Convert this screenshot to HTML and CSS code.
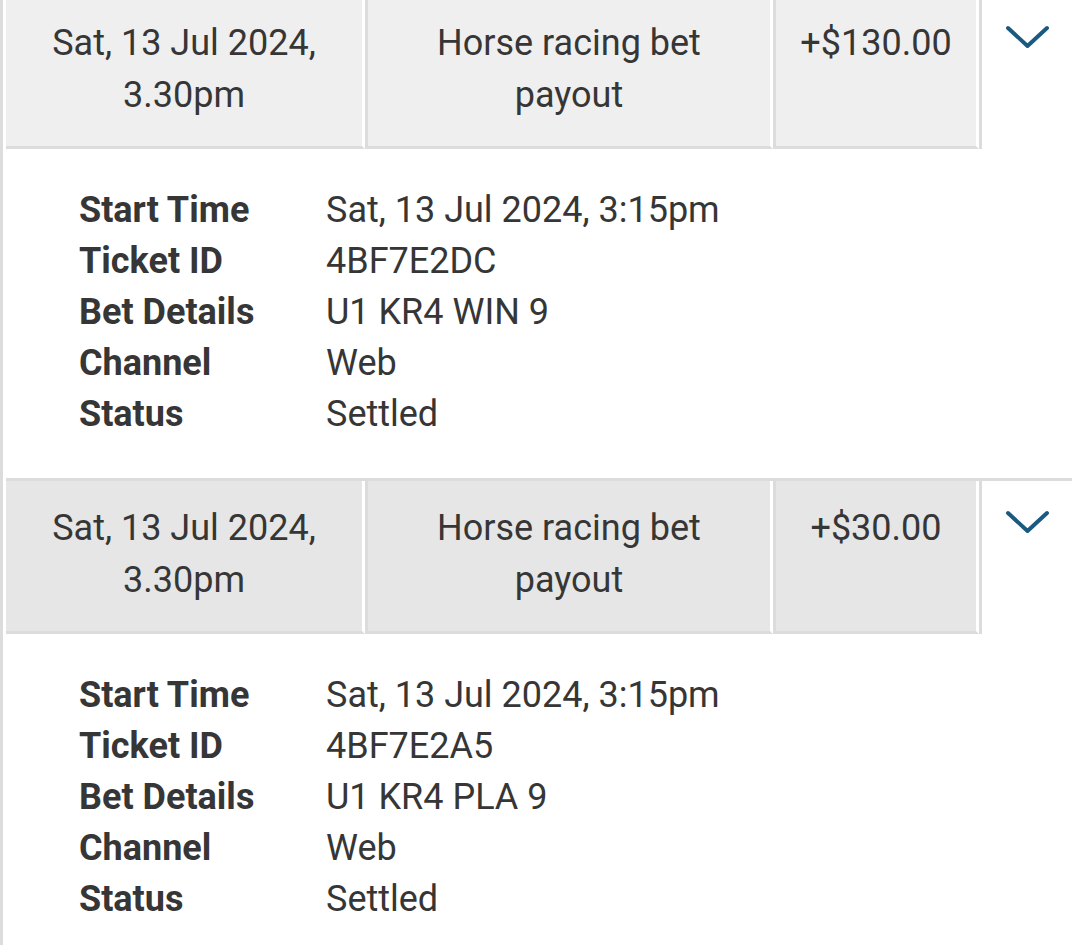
FILE: index.html
```html
<!DOCTYPE html>
<html lang="en">
  <head>
    <meta charset="UTF-8">
    <meta name="viewport" content="width=device-width, initial-scale=1.0">
    <title>Transactions</title>
    <link rel="stylesheet" href="styles.css">
  </head>
  <body>
    <div class="list">
      <!-- transaction 1 -->
      <div class="txn-head">
        <div class="cell cell-date">Sat, 13 Jul 2024,<br>3.30pm</div>
        <div class="cell cell-desc">Horse racing bet<br>payout</div>
        <div class="cell cell-amount">+$130.00</div>
        <div class="cell-toggle">
          <svg width="45" height="25" viewBox="0 0 45 25"><path d="M3 3 L22.5 21 L42 3" fill="none" stroke="#1b5a80" stroke-width="4" stroke-linecap="round" stroke-linejoin="round"/></svg>
        </div>
      </div>
      <div class="txn-detail">
        <div class="label">Start Time</div><div class="value">Sat, 13 Jul 2024, 3:15pm</div>
        <div class="label">Ticket ID</div><div class="value">4BF7E2DC</div>
        <div class="label">Bet Details</div><div class="value">U1 KR4 WIN 9</div>
        <div class="label">Channel</div><div class="value">Web</div>
        <div class="label">Status</div><div class="value">Settled</div>
      </div>

      <!-- transaction 2 -->
      <div class="txn-head txn-head-alt">
        <div class="cell cell-date">Sat, 13 Jul 2024,<br>3.30pm</div>
        <div class="cell cell-desc">Horse racing bet<br>payout</div>
        <div class="cell cell-amount">+$30.00</div>
        <div class="cell-toggle">
          <svg width="45" height="25" viewBox="0 0 45 25"><path d="M3 3 L22.5 21 L42 3" fill="none" stroke="#1b5a80" stroke-width="4" stroke-linecap="round" stroke-linejoin="round"/></svg>
        </div>
      </div>
      <div class="txn-detail">
        <div class="label">Start Time</div><div class="value">Sat, 13 Jul 2024, 3:15pm</div>
        <div class="label">Ticket ID</div><div class="value">4BF7E2A5</div>
        <div class="label">Bet Details</div><div class="value">U1 KR4 PLA 9</div>
        <div class="label">Channel</div><div class="value">Web</div>
        <div class="label">Status</div><div class="value">Settled</div>
      </div>
    </div>
  </body>
</html>
```

FILE: styles.css
```css
body {
  margin: 0;
  padding: 0;
  background-color: #fff;
  font-family: Roboto, "Liberation Sans", Arial, sans-serif;
  color: #363636;
  font-size: 36px;
  overflow: hidden;
}

.list {
  margin-top: -7px;
  border-left: 3px solid #dcdcdc;
  padding-left: 3px;
  min-height: 1000px;
}

.txn-head {
  display: grid;
  grid-template-columns: 359px 408px 206px 1fr;
  border-top: 3px solid #dcdcdc;
}

.cell {
  background-color: #efefef;
  border-right: 3px solid #fff;
  border-bottom: 3px solid #dcdcdc;
  padding: 21px 8px 25px;
  line-height: 52px;
  text-align: center;
}

.txn-head-alt .cell {
  background-color: #e6e6e6;
}

.cell + .cell,
.cell + .cell-toggle {
  border-left: 3px solid #dcdcdc;
}

.cell-toggle {
  display: flex;
  justify-content: center;
  align-items: flex-start;
  padding-top: 29px;
}

.txn-detail {
  display: grid;
  grid-template-columns: 247px 1fr;
  padding: 36px 0 38px 73px;
  line-height: 51px;
}

.label {
  font-weight: bold;
}
```
